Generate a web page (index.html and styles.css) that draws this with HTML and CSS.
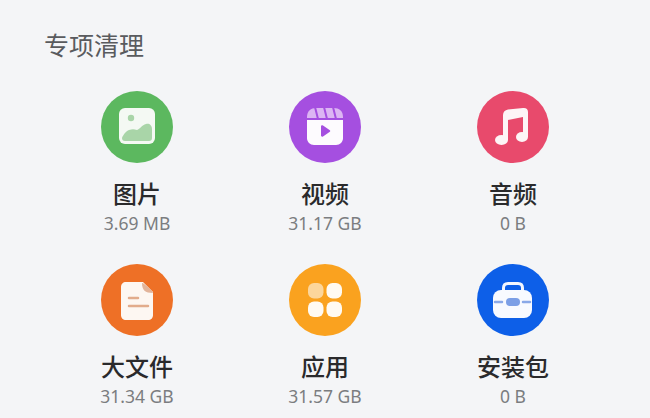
FILE: index.html
```html
<!DOCTYPE html>
<html>
<head>
<meta charset="UTF-8">
<title>专项清理</title>
<link rel="stylesheet" href="styles.css">
</head>
<body>
	<div class="page">
		<h2 class="title">专项清理</h2>
		<div class="grid">
			<div class="item">
				<svg class="icon" viewBox="0 0 72 72">
					<circle cx="36" cy="36" r="36" fill="#5cb85f"/>
					<rect x="18" y="17" width="36" height="36" rx="6" fill="#f4f9f3"/>
					<circle cx="30" cy="27" r="3.200" fill="#a9d5a8"/>
					<path d="M21 47c1-3 4-7 7-8 3-1 5-1 8 0 3-1 5-5 9-6 3-1 6 1 6 5v9c0 2-1 3-3 3H24c-2 0-3-1-3-3z" fill="#a9d5a8"/>
				</svg>
				<div class="name">图片</div>
				<div class="size">3.69 MB</div>
			</div>
			<div class="item">
				<svg class="icon" viewBox="0 0 72 72">
					<circle cx="36" cy="36" r="36" fill="#a54fe0"/>
					<path d="M18 27v-1c0-6 4-9 9-9h18c5 0 9 3 9 9v1z" fill="#dcb5f3"/>
					<path d="M26 16l3 12M35 16l3 12M44 16l3 12" stroke="#a54fe0" stroke-width="2"/>
					<path d="M18 29h36v18c0 4-3 7-7 7H25c-4 0-7-3-7-7z" fill="#fdfbfe"/>
					<path d="M32 35.500c0-1 1-1.500 2-1l6.500 4.500c1 .6 1 1.400 0 2l-6.500 4.500c-1 .5-2 0-2-1z" fill="#a54fe0"/>
				</svg>
				<div class="name">视频</div>
				<div class="size">31.17 GB</div>
			</div>
			<div class="item">
				<svg class="icon" viewBox="0 0 72 72">
					<circle cx="36" cy="36" r="36" fill="#e84a6c"/>
					<path d="M26 49V24c0-3 2-5 5-5.500L46 17c3-.4 5 1 5 4v25h-5V26l-15 3v20z" fill="#fdf5f6"/>
					<ellipse cx="24.500" cy="49" rx="6.500" ry="5" fill="#fdf5f6"/>
					<ellipse cx="45" cy="46" rx="6" ry="5" fill="#fdf5f6"/>
				</svg>
				<div class="name">音频</div>
				<div class="size">0 B</div>
			</div>
			<div class="item">
				<svg class="icon" viewBox="0 0 72 72">
					<circle cx="36" cy="36" r="36" fill="#ee7026"/>
					<path d="M25 18h17l10 10v23c0 3-2 5-5 5H25c-3 0-5-2-5-5V23c0-3 2-5 5-5z" fill="#fdf7f2"/>
					<path d="M41 19c0 7 3 10 11 10 0-2-9-10-11-10z" fill="#e2b49a"/>
					<path d="M28 34h9M28 42h19" stroke="#e2ac8c" stroke-width="2.500" stroke-linecap="round"/>
				</svg>
				<div class="name">大文件</div>
				<div class="size">31.34 GB</div>
			</div>
			<div class="item">
				<svg class="icon" viewBox="0 0 72 72">
					<circle cx="36" cy="36" r="36" fill="#faa21f"/>
					<rect x="19" y="19" width="15.500" height="15.500" rx="6" fill="#fcd69b"/>
					<rect x="37.500" y="19" width="15.500" height="15.500" rx="6" fill="#fffaf2"/>
					<rect x="19" y="37.500" width="15.500" height="15.500" rx="6" fill="#fffaf2"/>
					<rect x="37.500" y="37.500" width="15.500" height="15.500" rx="6" fill="#fffaf2"/>
				</svg>
				<div class="name">应用</div>
				<div class="size">31.57 GB</div>
			</div>
			<div class="item">
				<svg class="icon" viewBox="0 0 72 72">
					<circle cx="36" cy="36" r="36" fill="#0d5fe8"/>
					<path d="M26.500 27v-3c0-3 2-4.500 4.500-4.500h10c2.500 0 4.500 1.500 4.500 4.500v3" fill="none" stroke="#f4f7fe" stroke-width="3"/>
					<rect x="16" y="26" width="39" height="28" rx="8" fill="#f8faff"/>
					<path d="M18 38h7M46 38h7" stroke="#8aa9e8" stroke-width="2.500" stroke-linecap="round"/>
					<rect x="29" y="34" width="14" height="8" rx="4" fill="#7c9fe6"/>
				</svg>
				<div class="name">安装包</div>
				<div class="size">0 B</div>
			</div>
		</div>
	</div>
</body>
</html>
```
FILE: styles.css
```css
html,body{
	margin: 0;
	height: 100%;
	overflow: hidden;
}
body{
	background: #f4f5f7;
	font-family: "Noto Sans CJK SC","Noto Sans",sans-serif;
}
.page{
	padding: 28px 0 0 43px;
}
.title{
	margin: 0 0 30px 1px;
	font-size: 25px;
	line-height: 33px;
	font-weight: 400;
	color: #595b5e;
}
.grid{
	display: grid;
	grid-template-columns: repeat(3,188px);
	grid-auto-rows: 173px;
}
/* 每个清理项 */
.item{
	display: flex;
	flex-direction: column;
	align-items: center;
}
.icon{
	width: 72px;
	height: 72px;
	margin-bottom: 14px;
}
.name{
	font-size: 24px;
	line-height: 32px;
	font-weight: 500;
	color: #2a2a2c;
}
.size{
	margin-top: 3px;
	font-family: "Noto Sans",sans-serif;
	font-size: 17.5px;
	line-height: 23px;
	color: #7b7d80;
}
```
